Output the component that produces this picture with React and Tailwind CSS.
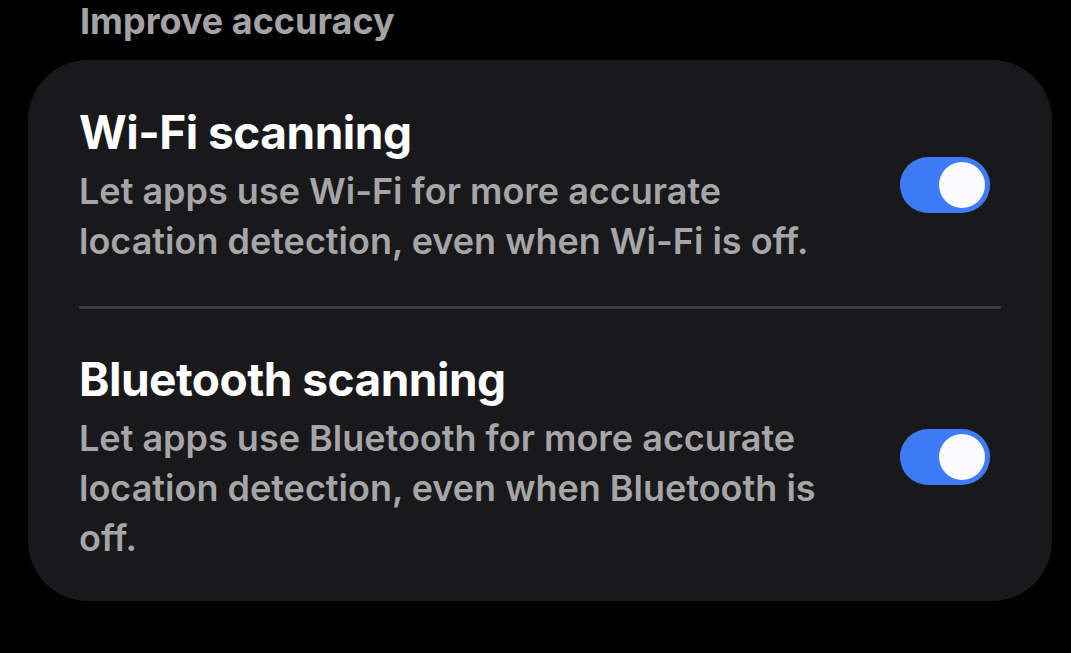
import React from "react";

const Toggle = () => (
  <div className="flex h-[56px] w-[90px] shrink-0 items-center justify-end rounded-full bg-[#3e7bf6] pr-[5px]">
    <div className="h-[46px] w-[46px] rounded-full bg-[#fbfbfd]" />
  </div>
);

const SettingRow = ({ title, desc }) => (
  <div className="flex items-center justify-between">
    <div className="flex flex-col gap-[5px]">
      <h2 className="text-[46px] font-bold leading-[58px] tracking-[-0.5px] text-white">{title}</h2>
      <p className="max-w-[760px] text-[36px] font-semibold leading-[50px] text-[#a6a6a8]">
        {desc}
      </p>
    </div>
    <div className="mr-[11px]">
      <Toggle />
    </div>
  </div>
);

export default function App() {
  return (
    <div
      className="h-[653px] w-[1071px] overflow-hidden bg-black"
      style={{ fontFamily: "Inter, 'Noto Sans', sans-serif" }}
    >
      {/* HEADER */}
      <p className="pl-[80px] text-[36px] font-bold leading-[42px] text-[#a3a3a5]">
        Improve accuracy
      </p>

      {/* CARD */}
      <div className="ml-[28px] mt-[18px] w-[1024px] rounded-[60px] bg-[#19191b] px-[51px] pb-[38px] pt-[43px]">
        <SettingRow
          title="Wi-Fi scanning"
          desc="Let apps use Wi-Fi for more accurate location detection, even when Wi-Fi is off."
        />

        <div className="mb-[41px] mt-[40px] h-[3px] bg-[#3a3a3c]" />

        <SettingRow
          title="Bluetooth scanning"
          desc="Let apps use Bluetooth for more accurate location detection, even when Bluetooth is off."
        />
      </div>
    </div>
  );
}
